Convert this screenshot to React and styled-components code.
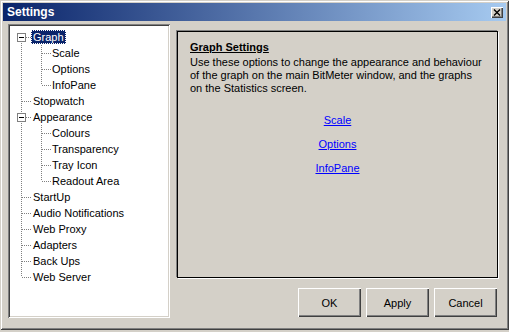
import React from 'react';
import styled, { createGlobalStyle } from 'styled-components';

const Global = createGlobalStyle`
  html, body { margin: 0; padding: 0; background: #d4d0c8; }
  body { font-family: "Liberation Sans", Arial, sans-serif; font-size: 11px; }
`;

const Window = styled.div`
  width: 509px;
  height: 330px;
  box-sizing: border-box;
  padding: 3px;
  display: flex;
  flex-direction: column;
  background: #d4d0c8;
  box-shadow: inset 1px 1px 0 #d4d0c8, inset -1px -1px 0 #404040,
    inset 2px 2px 0 #ffffff, inset -2px -2px 0 #808080;
`;

const TitleBar = styled.div`
  height: 18px;
  display: flex;
  align-items: center;
  justify-content: space-between;
  padding: 0 3px 0 4px;
  background: linear-gradient(to right, #0a246a, #a6caf0);
  color: #fff;
  font-weight: bold;
  font-size: 12px;
`;

const CloseButton = styled.div`
  width: 12px;
  height: 11px;
  box-sizing: border-box;
  background: #d4d0c8;
  display: flex;
  align-items: center;
  justify-content: center;
  box-shadow: inset 1px 1px 0 #fff, inset -1px -1px 0 #404040, inset -2px -2px 0 #808080;
`;

const Content = styled.div`
  flex: 1;
  display: flex;
  padding: 3px 8px 9px 5px;
`;

const Tree = styled.div`
  width: 162px;
  box-sizing: border-box;
  background: #fff;
  padding: 5px 0 0 3px;
  box-shadow: inset 1px 1px 0 #808080, inset -1px -1px 0 #fff,
    inset 2px 2px 0 #404040, inset -2px -2px 0 #d4d0c8;
`;

const Row = styled.div`
  height: 16px;
  display: flex;
  align-items: center;
`;

const Label = styled.span`
  height: 14px;
  line-height: 14px;
  padding: 0 2px;
  margin-left: ${p => (p.$child ? '-1px' : '0')};
  white-space: nowrap;
  color: ${p => (p.$selected ? '#fff' : '#000')};
  background: ${p => (p.$selected ? '#0a246a' : 'transparent')};
  outline: ${p => (p.$selected ? '1px dotted #ffffff' : 'none')};
  outline-offset: -1px;
`;

const Right = styled.div`
  flex: 1;
  margin-left: 7px;
  display: flex;
  flex-direction: column;
`;

const Frame = styled.div`
  margin-top: 7px;
  height: 247px;
  box-sizing: border-box;
  border: 1px solid #000;
  box-shadow: -1px -1px 0 #808080, 1px 1px 0 #fff;
  padding: 8px 12px 0;
  display: flex;
  flex-direction: column;
`;

const Heading = styled.div`
  font-weight: bold;
  text-decoration: underline;
  line-height: 14px;
  margin-bottom: 2px;
`;

const Text = styled.p`
  margin: 0;
  line-height: 13px;
`;

const Links = styled.div`
  margin-top: 19px;
  display: flex;
  flex-direction: column;
  align-items: center;
  gap: 11px;
`;

const Link = styled.a`
  color: #0000ff;
  text-decoration: underline;
  line-height: 13px;
  cursor: pointer;
`;

const Buttons = styled.div`
  margin-top: 10px;
  display: flex;
  justify-content: flex-end;
  gap: 5px;
  padding-right: 1px;
`;

const Button = styled.button`
  width: 63px;
  height: 29px;
  border: none;
  background: #d4d0c8;
  font-family: inherit;
  font-size: 11px;
  color: #000;
  box-shadow: inset 1px 1px 0 #fff, inset -1px -1px 0 #404040, inset -2px -2px 0 #808080;
`;

const LINE = '#808080';

function Cell({ type }) {
  const dash = { stroke: LINE, strokeWidth: 1, strokeDasharray: '1 1', shapeRendering: 'crispEdges' };
  const x = 10.5;
  return (
    <svg width="20" height="16" viewBox="0 0 20 16" style={{ flex: 'none' }}>
      {(type === 'pipe' || type === 'tee') && <line x1={x} y1="0" x2={x} y2="16" {...dash} />}
      {type === 'elbow' && <line x1={x} y1="0" x2={x} y2="8" {...dash} />}
      {type === 'first' && <line x1={x} y1="8" x2={x} y2="16" {...dash} />}
      {type !== 'pipe' && type !== 'blank' && <line x1={x} y1="8.5" x2="20" y2="8.5" {...dash} />}
    </svg>
  );
}

function Expander({ type }) {
  return (
    <svg width="20" height="16" viewBox="0 0 20 16" style={{ flex: 'none' }}>
      {type === 'first' ? (
        <line x1="10.5" y1="8" x2="10.5" y2="16" stroke={LINE} strokeDasharray="1 1" shapeRendering="crispEdges" />
      ) : (
        <line x1="10.5" y1="0" x2="10.5" y2="16" stroke={LINE} strokeDasharray="1 1" shapeRendering="crispEdges" />
      )}
      <line x1="15" y1="8.5" x2="20" y2="8.5" stroke={LINE} strokeDasharray="1 1" shapeRendering="crispEdges" />
      <rect x="6.5" y="4.5" width="8" height="8" fill="#fff" stroke={LINE} shapeRendering="crispEdges" />
      <line x1="8" y1="8.5" x2="13" y2="8.5" stroke="#000" shapeRendering="crispEdges" />
    </svg>
  );
}

const items = [
  { label: 'Graph', cells: ['first'], box: true, selected: true },
  { label: 'Scale', cells: ['pipe', 'tee'] },
  { label: 'Options', cells: ['pipe', 'tee'] },
  { label: 'InfoPane', cells: ['pipe', 'elbow'] },
  { label: 'Stopwatch', cells: ['tee'] },
  { label: 'Appearance', cells: ['tee'], box: true },
  { label: 'Colours', cells: ['pipe', 'tee'] },
  { label: 'Transparency', cells: ['pipe', 'tee'] },
  { label: 'Tray Icon', cells: ['pipe', 'tee'] },
  { label: 'Readout Area', cells: ['pipe', 'elbow'] },
  { label: 'StartUp', cells: ['tee'] },
  { label: 'Audio Notifications', cells: ['tee'] },
  { label: 'Web Proxy', cells: ['tee'] },
  { label: 'Adapters', cells: ['tee'] },
  { label: 'Back Ups', cells: ['tee'] },
  { label: 'Web Server', cells: ['elbow'] },
];

export default function App() {
  return (
    <>
      <Global />
      <Window>
        <TitleBar>
          <span>Settings</span>
          <CloseButton>
            <svg width="8" height="7" viewBox="0 0 8 7">
              <path d="M1 0.5 L7 6.5 M7 0.5 L1 6.5" stroke="#000" strokeWidth="1.4" />
            </svg>
          </CloseButton>
        </TitleBar>
        <Content>
          <Tree>
            {items.map(item => (
              <Row key={item.label}>
                {item.box ? (
                  <Expander type={item.cells[0]} />
                ) : (
                  item.cells.map((c, i) => <Cell key={i} type={c} />)
                )}
                <Label $selected={item.selected} $child={item.cells.length > 1}>
                  {item.label}
                </Label>
              </Row>
            ))}
          </Tree>
          <Right>
            <Frame>
              <Heading>Graph Settings</Heading>
              <Text>
                Use these options to change the appearance and behaviour of the graph on the
                main BitMeter window, and the graphs on the Statistics screen.
              </Text>
              <Links>
                <Link>Scale</Link>
                <Link>Options</Link>
                <Link>InfoPane</Link>
              </Links>
            </Frame>
            <Buttons>
              <Button>OK</Button>
              <Button>Apply</Button>
              <Button>Cancel</Button>
            </Buttons>
          </Right>
        </Content>
      </Window>
    </>
  );
}
